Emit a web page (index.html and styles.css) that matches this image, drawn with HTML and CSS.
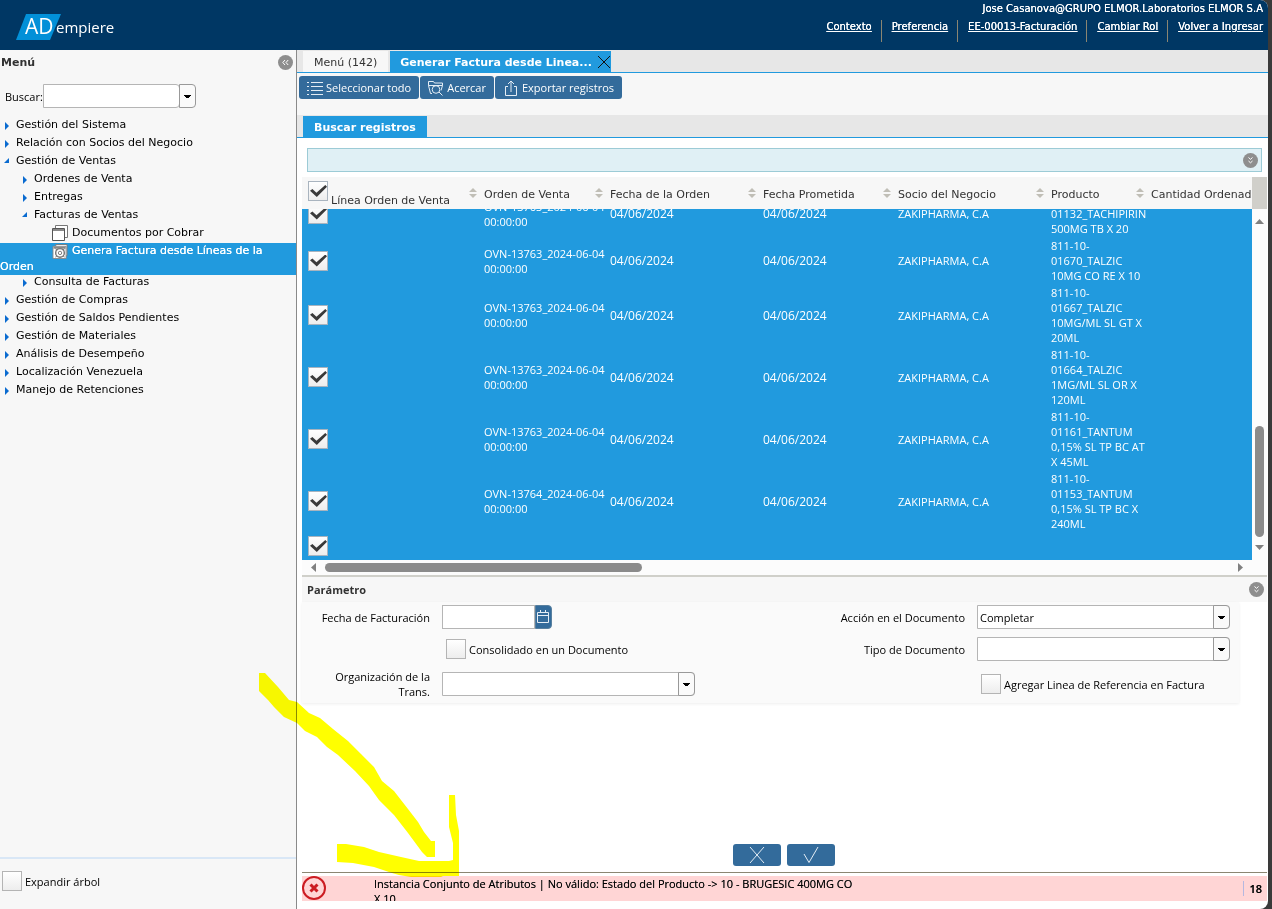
FILE: index.html
```html
<!DOCTYPE html>
<html lang="es">
<head>
<meta charset="utf-8">
<title>ADempiere</title>
<link rel="stylesheet" href="styles.css">
</head>
<body>
<svg class="defs" aria-hidden="true">
  <symbol id="down" viewBox="0 0 15 15"><circle cx="7.500" cy="7.500" r="7.500" fill="#8e8e8e"/><path d="M5.500 4.500l2 1.800 2-1.800M5.500 8l2 1.800 2-1.800" fill="none" stroke="#fff"/></symbol>
</svg>
<div class="app">
  <header class="top">
    <svg class="logo" viewBox="0 0 100 28" role="img" aria-label="ADempiere">
      <path d="M10 1h35L34 27H0z" fill="#0290d8"/>
      <text x="9" y="21" class="logo-ad">AD</text>
      <text x="40" y="20" class="logo-rest">empiere</text>
    </svg>
    <div class="session">
      <div class="user">Jose Casanova@GRUPO ELMOR.Laboratorios ELMOR S.A</div>
      <nav class="links">
        <a href="#">Contexto</a><a href="#">Preferencia</a><a href="#">EE-00013-Facturación</a><a href="#">Cambiar Rol</a><a href="#">Volver a Ingresar</a>
      </nav>
    </div>
  </header>

  <div class="body">
    <aside class="side">
      <div class="side-title"><span>Menú</span>
        <button class="round" aria-label="Contraer"><svg viewBox="0 0 15 15"><circle cx="7.500" cy="7.500" r="7.500" fill="#8e8e8e"/><path d="M7 5L4.800 7.500 7 10M10.200 5L8 7.500l2.200 2.500" fill="none" stroke="#fff"/></svg></button>
      </div>
      <div class="search"><label for="q">Buscar:</label><div class="combo"><input id="q" type="text"><button class="drop" aria-label="Abrir lista"></button></div></div>
      <ul class="tree">
        <li><i class="tri"></i>Gestión del Sistema</li>
        <li><i class="tri"></i>Relación con Socios del Negocio</li>
        <li><i class="tri open"></i>Gestión de Ventas</li>
        <li class="l2"><i class="tri"></i>Ordenes de Venta</li>
        <li class="l2"><i class="tri"></i>Entregas</li>
        <li class="l2"><i class="tri open"></i>Facturas de Ventas</li>
        <li class="leaf"><svg class="ti" viewBox="0 0 16 16"><path d="M3.500 3V.500h12v12H13" fill="#fff" stroke="#777"/><path d="M.500 3.500h12v12H.500z" fill="#fff" stroke="#555"/><path d="M1 4h11v2H1z" fill="#888"/></svg>Documentos por Cobrar</li>
        <li class="sel"><i class="pad"></i><svg class="ti" viewBox="0 0 16 16"><path d="M3.500 3V.500h12v12H13" fill="#fff" stroke="#777"/><path d="M.500 2.500h14v13H.500z" fill="#fff" stroke="#888"/><path d="M1 3h13v2H1z" fill="#888"/><circle cx="8" cy="9.500" r="4.600" fill="#fff" stroke="#777" stroke-width="1.500"/><circle cx="8" cy="9.500" r="1.800" fill="none" stroke="#777"/><path d="M3 5l2 1.500M13 5l-2 1.500M3 14l2-1.500M13 14l-2-1.500" stroke="#777"/></svg>Genera Factura desde Líneas de la Orden</li>
        <li class="l2"><i class="tri"></i>Consulta de Facturas</li>
        <li><i class="tri"></i>Gestión de Compras</li>
        <li><i class="tri"></i>Gestión de Saldos Pendientes</li>
        <li><i class="tri"></i>Gestión de Materiales</li>
        <li><i class="tri"></i>Análisis de Desempeño</li>
        <li><i class="tri"></i>Localización Venezuela</li>
        <li><i class="tri"></i>Manejo de Retenciones</li>
      </ul>
      <div class="side-foot"><label><input type="checkbox">Expandir árbol</label></div>
    </aside>

    <main class="main">
      <div class="tabs">
        <button class="tab">Menú (142)</button>
        <div class="tab on"><span>Generar Factura desde Linea...</span><button class="x" aria-label="Cerrar"><svg viewBox="0 0 12 12"><path d="M0 0l12 12M12 0L0 12" stroke="#111" fill="none"/></svg></button></div>
      </div>
      <div class="tools">
        <button class="btn"><svg viewBox="0 0 16 16"><path d="M4 2.500h12M4 6.500h12M4 10.500h12M4 14.500h12M0 2.500h2M0 6.500h2M0 10.500h2M0 14.500h2"/></svg>Seleccionar todo</button>
        <button class="btn"><svg viewBox="0 0 16 16"><path d="M4 13.500H2.500l-2-8V1.500h5l1 1.500h8v2.500l-1.500 5M.500 5.500h14"/><circle cx="8" cy="9.500" r="3.800"/><path d="M11 12l3.500 3.500"/></svg>Acercar</button>
        <button class="btn"><svg viewBox="0 0 16 16"><path d="M5 6.500H2.500v9h11v-9H11M8 12V1M5 4l3-3 3 3"/></svg>Exportar registros</button>
      </div>
      <div class="tabs sub"><button class="tab on">Buscar registros</button></div>

      <div class="content">
        <div class="strip"><button class="round" aria-label="Expandir"><svg><use href="#down"/></svg></button></div>
        <div class="grid">
          <div class="grid-head">
            <div class="head-view">
            <table>
              <colgroup><col class="c1"><col class="c2"><col class="c3"><col class="c4"><col class="c5"><col class="c6"><col></colgroup>
              <thead><tr>
                <th><label class="all"><input type="checkbox" checked><span>Línea Orden de Venta</span></label><i class="sort"></i></th>
                <th>Orden de Venta<i class="sort"></i></th>
                <th>Fecha de la Orden<i class="sort"></i></th>
                <th>Fecha Prometida<i class="sort"></i></th>
                <th>Socio del Negocio<i class="sort"></i></th>
                <th>Producto<i class="sort"></i></th>
                <th>Cantidad Ordenada</th>
              </tr></thead>
            </table>
            </div>
            <div class="corner"></div>
          </div>
          <div class="grid-mid">
            <div class="view">
              <table>
                <colgroup><col class="c1"><col class="c2"><col class="c3"><col class="c4"><col class="c5"><col class="c6"><col></colgroup>
                <tbody>
                  <tr><td><input type="checkbox" checked aria-label="Fila 1"></td><td>OVN-13763_2024-06-04<br>00:00:00</td><td class="d">04/06/2024</td><td class="d">04/06/2024</td><td>ZAKIPHARMA, C.A</td><td>811-10-<br>01132_TACHIPIRIN<br>500MG TB X 20</td><td></td></tr>
                  <tr><td><input type="checkbox" checked aria-label="Fila 2"></td><td>OVN-13763_2024-06-04<br>00:00:00</td><td class="d">04/06/2024</td><td class="d">04/06/2024</td><td>ZAKIPHARMA, C.A</td><td>811-10-<br>01670_TALZIC<br>10MG CO RE X 10</td><td></td></tr>
                  <tr><td><input type="checkbox" checked aria-label="Fila 3"></td><td>OVN-13763_2024-06-04<br>00:00:00</td><td class="d">04/06/2024</td><td class="d">04/06/2024</td><td>ZAKIPHARMA, C.A</td><td>811-10-<br>01667_TALZIC<br>10MG/ML SL GT X<br>20ML</td><td></td></tr>
                  <tr><td><input type="checkbox" checked aria-label="Fila 4"></td><td>OVN-13763_2024-06-04<br>00:00:00</td><td class="d">04/06/2024</td><td class="d">04/06/2024</td><td>ZAKIPHARMA, C.A</td><td>811-10-<br>01664_TALZIC<br>1MG/ML SL OR X<br>120ML</td><td></td></tr>
                  <tr><td><input type="checkbox" checked aria-label="Fila 5"></td><td>OVN-13763_2024-06-04<br>00:00:00</td><td class="d">04/06/2024</td><td class="d">04/06/2024</td><td>ZAKIPHARMA, C.A</td><td>811-10-<br>01161_TANTUM<br>0,15% SL TP BC AT<br>X 45ML</td><td></td></tr>
                  <tr><td><input type="checkbox" checked aria-label="Fila 6"></td><td>OVN-13764_2024-06-04<br>00:00:00</td><td class="d">04/06/2024</td><td class="d">04/06/2024</td><td>ZAKIPHARMA, C.A</td><td>811-10-<br>01153_TANTUM<br>0,15% SL TP BC X<br>240ML</td><td></td></tr>
                  <tr class="last"><td><input type="checkbox" checked aria-label="Fila 7"></td><td></td><td></td><td></td><td></td><td></td><td></td></tr>
                </tbody>
              </table>
            </div>
            <div class="vbar"><i class="ar up"></i><i class="thumb"></i><i class="ar dn"></i></div>
          </div>
          <div class="hbar"><i class="ar lf"></i><i class="thumb"></i><i class="ar rt"></i></div>
        </div>

        <section class="params">
          <div class="params-title"><span>Parámetro</span><button class="round" aria-label="Contraer"><svg><use href="#down"/></svg></button></div>
          <div class="form">
            <label for="f1">Fecha de Facturación</label>
            <div class="date"><input id="f1" type="text"><button aria-label="Calendario"><svg viewBox="0 0 14 14"><path d="M1.500 2.500h11v10h-11zM1.500 5.500h11M4.500 0v3M9.500 0v3"/></svg></button></div>
            <label for="f2">Acción en el Documento</label>
            <div class="combo"><select id="f2"><option>Completar</option></select></div>
            <label class="check in2"><input type="checkbox">Consolidado en un Documento</label>
            <label for="f3">Tipo de Documento</label>
            <div class="combo"><select id="f3"><option></option></select></div>
            <label for="f4">Organización de la<br>Trans.</label>
            <div class="combo"><select id="f4"><option></option></select></div>
            <label class="check in4"><input type="checkbox">Agregar Linea de Referencia en Factura</label>
          </div>
        </section>

        <div class="actions">
          <button class="btn" aria-label="Cancelar"><svg viewBox="0 0 16 16"><path d="M1 0l14 16M15 0L1 16"/></svg></button>
          <button class="btn" aria-label="Aceptar"><svg viewBox="0 0 16 16"><path d="M1 7l5 8.500L15 0"/></svg></button>
        </div>
        <footer class="status">
          <div class="error">
            <svg class="err" viewBox="0 0 24 24"><circle cx="12" cy="12" r="11" fill="none" stroke="#cc1c22" stroke-width="2"/><path d="M8.500 8.500l7 7M15.500 8.500l-7 7" stroke="#cc1c22" stroke-width="3"/></svg>
            <p>Instancia Conjunto de Atributos | No válido: Estado del Producto -&gt; 10 - BRUGESIC 400MG CO X 10</p>
            <span class="count">18</span>
          </div>
        </footer>
      </div>
    </main>
  </div>
</div>
<svg class="mark" viewBox="0 0 204 206" aria-hidden="true"><path fill="#ff0" d="M0 0H6L19 14L30 27L38 29L50 40L61 45L74 56L89 68L102 81L115 94L123 108L135 118L149 136L159 149L165 159L172 168H176V184H168L163 179L149 160L135 142L120 127L110 113L96 98L79 82L68 74L58 64L46 58L38 50L25 44L15 34L9 27L0 18zM78 171H87L105 174L120 179L142 184L160 188H190L194 187L194 170L190 154V122H196L197 142L200 158V203H184L182 204L152 204L140 202L133 200L115 194L94 190L78 189z"/></svg>
</body>
</html>
```
FILE: styles.css
```css
*, *::before, *::after { box-sizing: border-box; }
body { margin: 0; background: #3a3a3a; font: 11px/15px "Open Sans", "Noto Sans", sans-serif; color: #111; }
button, input, select { font: inherit; color: inherit; margin: 0; padding: 0; border: 0; border-radius: 0; }
button { background: none; cursor: pointer; }
svg { display: block; }
.defs { position: absolute; width: 0; height: 0; }
.app { height: 100vh; margin-right: 4px; display: flex; flex-direction: column; background: #fff; border-radius: 0 8px 8px 0; overflow: hidden; }

.top { flex: none; height: 50px; background: #003764; color: #fff; display: flex; justify-content: space-between; padding-left: 16px; }
.logo { width: 100px; height: 28px; margin-top: 13px; overflow: visible; }
.logo text { fill: #fff; font-family: "Open Sans", sans-serif; }
.logo-ad { font-size: 21px; }
.logo-rest { font-size: 15px; }
.session { font-family: "DejaVu Sans", sans-serif; font-size: 10px; text-align: right; padding: 1px 5px 0 0; text-shadow: 0 0 #fff; }
.links { display: flex; justify-content: flex-end; margin-top: 4px; }
.links a { color: #fff; height: 22px; padding: 0 9px 0 10px; border-right: 1px solid #8b8672; line-height: 14px; }
.links a:last-child { border: 0; padding-right: 0; }

.body { flex: 1; min-height: 0; display: flex; }
.side { flex: none; width: 297px; background: #f7f7f7; border-right: 1px solid #8a8a8a; display: flex; flex-direction: column; font-family: "DejaVu Sans", sans-serif; color: #000; }
.side-title { height: 25px; padding: 0 3px 0 1px; display: flex; align-items: center; justify-content: space-between; font-weight: bold; color: #333; }
.round, .round svg { width: 15px; height: 15px; flex: none; }
.search { display: flex; align-items: center; margin: 9px 0 8px; padding-left: 5px; font-family: "Open Sans", sans-serif; }
.search .combo { width: 153px; }
.combo { position: relative; display: flex; height: 24px; }
.combo input, .combo select { flex: 1; min-width: 0; border: 1px solid #b5b5b5; background: #fff; border-radius: 0 4px 4px 0; appearance: none; padding-left: 2px; }
.drop { flex: none; position: relative; width: 17px; margin-left: -1px; }
.drop::after, .combo:has(select)::after { content: ""; position: absolute; right: 0; top: 0; width: 17px; height: 24px; pointer-events: none; border: 1px solid #999; border-radius: 0 4px 4px 0; background: linear-gradient(#000, #000) 4px 10px / 7px 1px no-repeat, linear-gradient(#000, #000) 5px 11px / 5px 1px no-repeat, linear-gradient(#000, #000) 6px 12px / 3px 1px no-repeat, #fafafa; }

.tree { list-style: none; margin: 0; padding: 0; }
.tree li { line-height: 18px; padding-left: 5px; }
.tree .l2 { padding-left: 23px; }
.tree .leaf { padding-left: 52px; padding-bottom: 1px; }
.tri { display: inline-block; width: 11px; height: 8px; vertical-align: -2px; }
.tri::before { content: ""; display: block; width: 4px; height: 8px; background: #0a6bd0; clip-path: polygon(0 0, 100% 50%, 0 100%); }
.tri.open::before { width: 5px; height: 5px; margin-left: -1px; clip-path: polygon(100% 0, 100% 100%, 0 100%); }
.ti { display: inline-block; width: 16px; height: 16px; margin-right: 4px; vertical-align: top; margin-top: 1px; }
.tree .sel { line-height: 16px; padding: 0 30px 0 0; margin-bottom: -2px; background: #219ade; color: #fff; text-shadow: 0 0 #fff; }
.sel .ti { height: 15px; }
.pad { display: inline-block; width: 52px; }
.side-foot { margin-top: auto; height: 52px; padding: 12px 2px 0; border-top: 2px solid #d9e7f6; font-family: "Open Sans", sans-serif; }
.side-foot label { display: flex; gap: 3px; align-items: center; }

input[type="checkbox"] { appearance: none; flex: none; display: block; width: 20px; height: 20px; border: 1px solid #b4b4b4; background: linear-gradient(#fff, #ededed); }
input[type="checkbox"]:checked { border-color: #a9b4bf; }
input[type="checkbox"]:checked::before { content: ""; display: block; width: 17px; height: 12px; margin: 3px 0 0 1px; background: #3a3a3a; clip-path: polygon(0 48%, 14% 34%, 38% 64%, 90% 0, 100% 14%, 40% 100%); }

.main { flex: 1; min-width: 0; display: flex; flex-direction: column; }
.tabs { flex: none; display: flex; gap: 2px; height: 23px; padding: 1px 0 0 6px; background: #e7e7e7; border-bottom: 1px solid #219ade; font-family: "DejaVu Sans", sans-serif; }
.tab { display: flex; align-items: center; padding: 1px 11px 0; background: #f7f7f7; color: #333; white-space: nowrap; }
.tab.on { background: #219ade; color: #fff; font-weight: bold; }
div.tab { padding: 1px 1px 0 10px; gap: 6px; }
.x, .x svg { width: 12px; height: 12px; }
.tools { flex: none; height: 42px; padding: 3px 2px; display: flex; gap: 1px; background: #f7f7f7; }
.btn { display: flex; align-items: center; gap: 3px; height: 23px; padding: 0 8px; border-radius: 3px; background: #336b9b; color: #fff; white-space: nowrap; }
.btn svg { width: 16px; height: 16px; }
.btn svg, .date svg { fill: none; stroke: #e4edf5; }

.content { flex: 1; min-height: 0; display: flex; flex-direction: column; padding: 10px 1px 8px 5px; }
.strip { flex: none; height: 24px; margin: 0 5px; padding-right: 3px; border: 1px solid #9ccbd6; background: #e0f0f5; display: flex; justify-content: flex-end; align-items: center; }
.grid { flex: 1; min-height: 0; margin-top: 5px; display: flex; flex-direction: column; border-bottom: 2px solid #d0d0ca; }
.grid-head { flex: none; display: flex; height: 32px; background: #f7f7f7; overflow: hidden; }
.head-view { flex: 1; min-width: 0; }
.corner { flex: none; width: 15px; background: #d0cfca; }
table { table-layout: fixed; width: 100%; border-collapse: collapse; }
.grid-head table { height: 32px; }
.c1 { width: 178px; } .c2 { width: 126px; } .c3 { width: 153px; } .c4 { width: 135px; } .c5 { width: 153px; } .c6 { width: 100px; }
th { position: relative; padding: 2px 0 0 4px; text-align: left; font: 11px/15px "DejaVu Sans", sans-serif; color: #333; white-space: nowrap; overflow: hidden; }
th:first-child { padding: 3px 0 0 6px; }
.all { display: flex; gap: 3px; }
.all span { padding-top: 12px; }
.sort { position: absolute; right: 3px; top: 11px; width: 8px; height: 10px; background: #c0beb6; clip-path: polygon(50% 0, 100% 40%, 0 40%, 0 60%, 100% 60%, 50% 100%, 0 60%, 0 40%); }
.grid-mid { flex: 1; min-height: 0; display: flex; }
.view { flex: 1; min-width: 0; display: flex; flex-direction: column; justify-content: flex-end; overflow: hidden; background: #219ade; color: #fff; }
td { padding: 1px 0 1px 4px; height: 47px; white-space: nowrap; vertical-align: middle; }
td:first-child { padding-left: 6px; }
.last td { height: 28px; }
.d { font-size: 12px; }
.vbar { flex: none; width: 15px; display: flex; flex-direction: column; align-items: center; padding: 10px 0; background: #fcfcfc; }
.vbar .thumb { width: 9px; height: 111px; margin: auto 0 8px; border-radius: 5px; background: #8b8b8b; }
.hbar { flex: none; height: 15px; padding: 0 24px 0 9px; display: flex; align-items: center; background: #fcfcfc; }
.hbar .thumb { width: 34%; height: 9px; margin: 0 auto 0 9px; border-radius: 5px; background: #8b8b8b; }
.ar { width: 9px; height: 5px; background: #808080; }
.up { clip-path: polygon(50% 0, 100% 100%, 0 100%); }
.dn { clip-path: polygon(0 0, 100% 0, 50% 100%); }
.lf, .rt { width: 5px; height: 9px; }
.lf { clip-path: polygon(100% 0, 100% 100%, 0 50%); }
.rt { clip-path: polygon(0 0, 100% 50%, 0 100%); }

.params { flex: none; }
.params-title { height: 25px; padding: 0 3px 0 5px; display: flex; align-items: center; justify-content: space-between; background: #f7f7f7; font-weight: bold; color: #333; }
.form { display: grid; grid-template-columns: 128px 253px 1fr 253px; grid-template-rows: 24px 24px 30px; column-gap: 12px; row-gap: 8px; align-items: center; margin-right: 28px; padding: 3px 9px 4px 0; background: #fafafa; box-shadow: 0 1px 3px #eee; color: #000; }
.form > label { text-align: right; }
.form > .check { display: flex; align-items: center; gap: 3px; padding-left: 4px; text-align: left; }
.in2 { grid-column: 2; }
.in4 { grid-column: 4; }
.date { display: flex; width: 110px; height: 24px; }
.date input { flex: 1; min-width: 0; border: 1px solid #b5b5b5; background: #fff; }
.date button { width: 17px; padding: 0; background: #336b9b; border: 1px solid #58809f; border-radius: 0 4px 4px 0; }
.date svg { width: 14px; height: 14px; }

.actions { flex: none; display: flex; justify-content: center; gap: 6px; padding: 141px 2px 6px 0; }
.actions .btn { width: 48px; height: 22px; justify-content: center; }
.status { flex: none; border-top: 1px solid #8b8672; padding-top: 3px; }
.error { height: 25px; overflow: hidden; display: flex; background: #ffd5d5; color: #000; text-shadow: 0 0 #555; }
.err { flex: none; width: 24px; height: 24px; }
.error p { width: 484px; margin: 0 0 0 48px; }
.count { margin: 5px 5px 0 auto; padding: 0 0 0 5px; height: 15px; border-left: 1px solid #b5b8e0; font-weight: 600; }
.mark { position: absolute; left: 259px; top: 673px; width: 204px; height: 206px; mix-blend-mode: multiply; pointer-events: none; }
```
